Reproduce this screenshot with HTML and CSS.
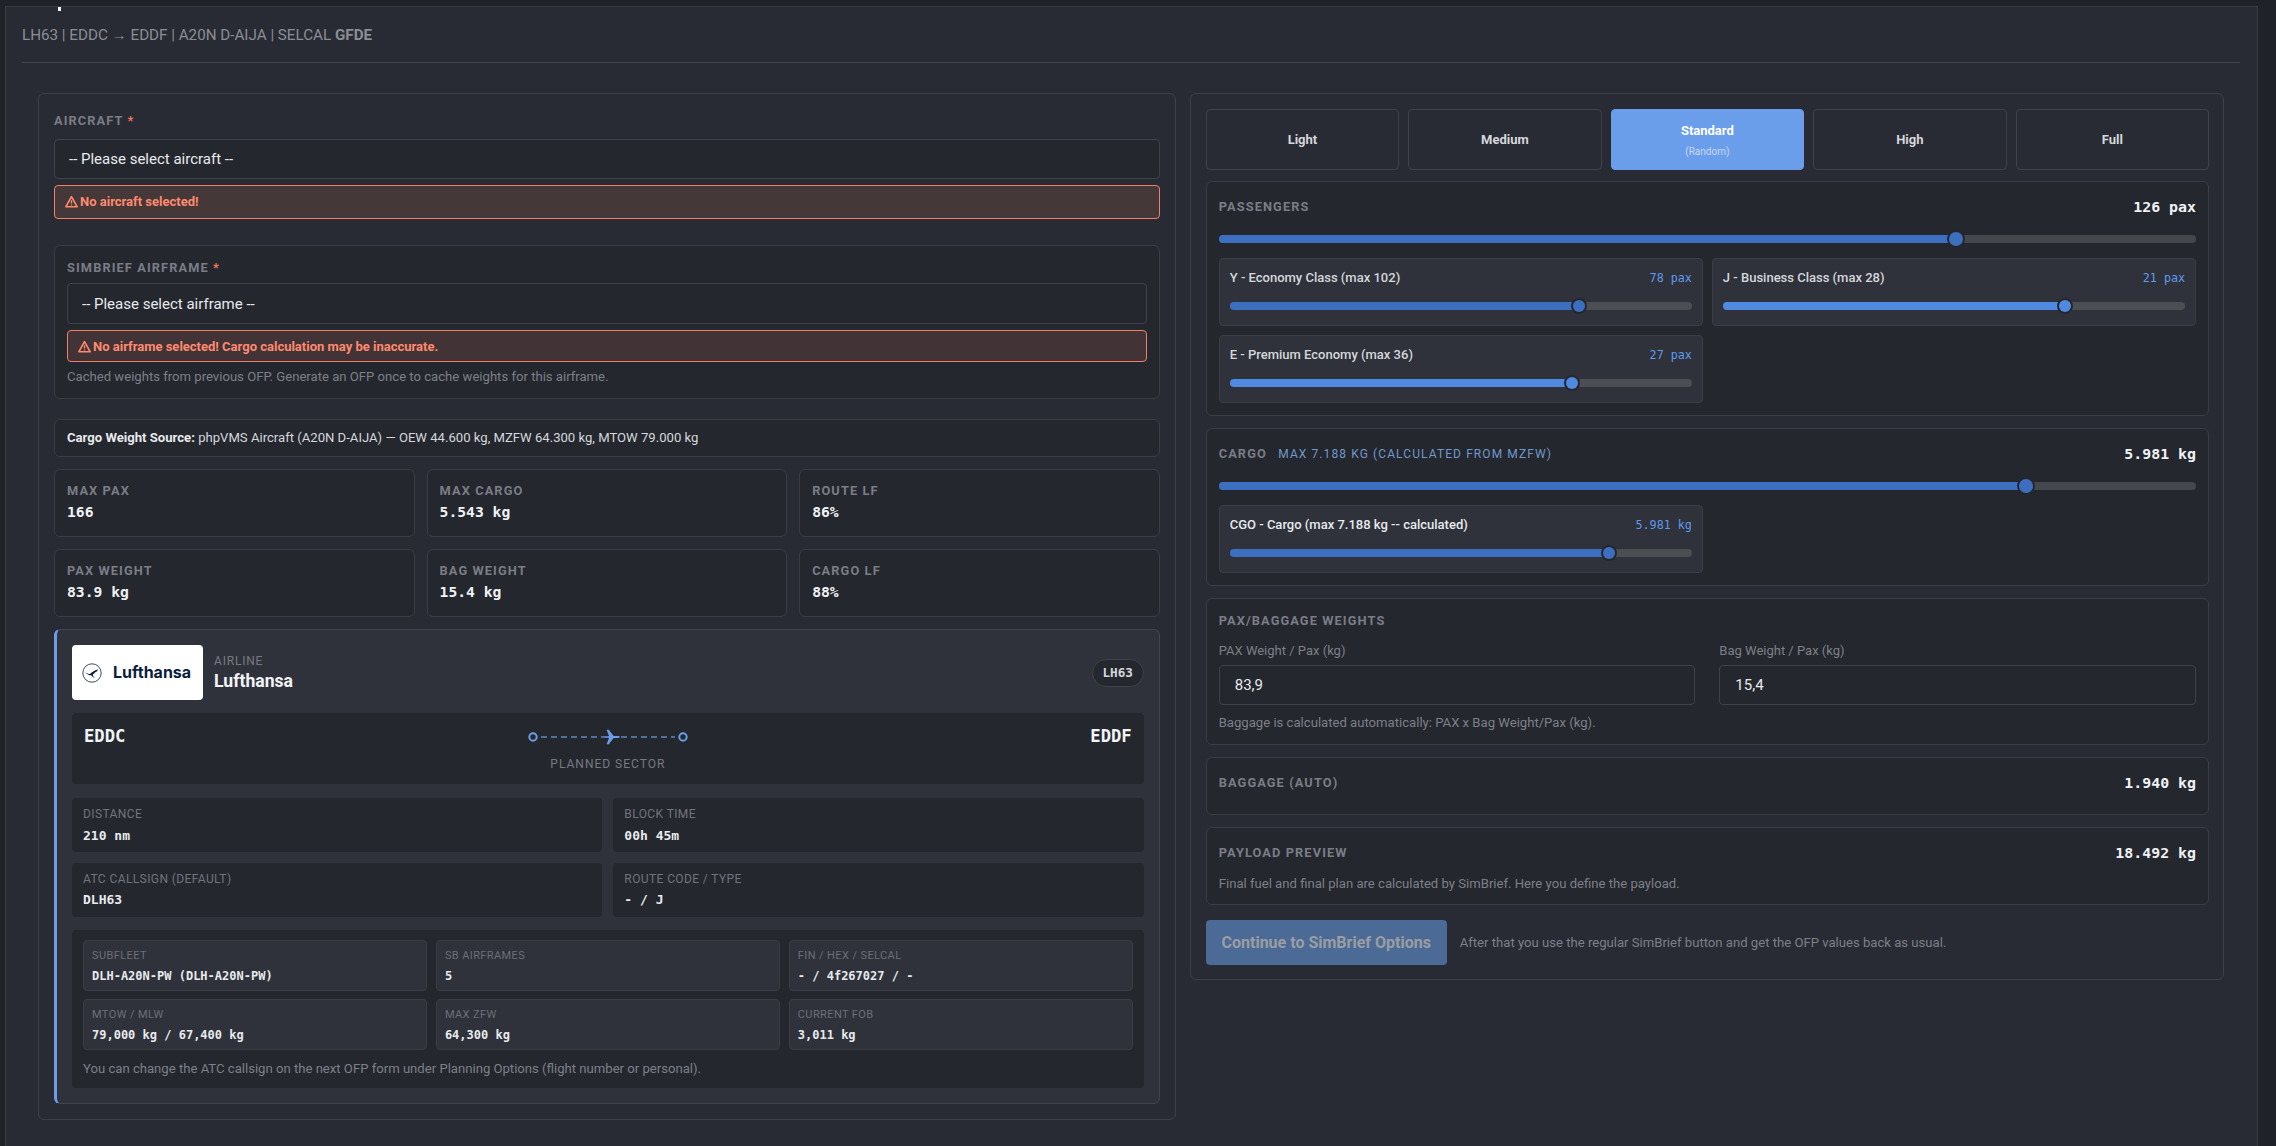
FILE: index.html
```html
<!doctype html>
<html>
<head>
<title>Payload Planning</title>
<link rel="stylesheet" href="styles.css">
</head>
<body>

<div class="page">
	<span class="clipMark"></span>
	<div class="flightLine">LH63 | EDDC → EDDF | A20N D-AIJA | SELCAL <b>GFDE</b></div>
	<hr class="rule">

	<div class="columns">
		<div class="panel leftPanel">
			<div class="field">
				<div class="caption">AIRCRAFT <span class="req">*</span></div>
				<select class="select"><option>-- Please select aircraft --</option></select>
				<div class="alert alertTall">
					<svg class="warnIcon" viewBox="0 0 16 16"><path d="M8 2 L15 14.5 H1 Z" fill="none" stroke="currentColor" stroke-width="2" stroke-linejoin="round"/><path d="M8 6.5 V10.5 M8 11.6 V13" stroke="currentColor" stroke-width="1.7"/></svg>
					No aircraft selected!
				</div>
			</div>

			<div class="card airframe">
				<div class="caption">SIMBRIEF AIRFRAME <span class="req">*</span></div>
				<select class="select selectTall"><option>-- Please select airframe --</option></select>
				<div class="alert">
					<svg class="warnIcon" viewBox="0 0 16 16"><path d="M8 2 L15 14.5 H1 Z" fill="none" stroke="currentColor" stroke-width="2" stroke-linejoin="round"/><path d="M8 6.5 V10.5 M8 11.6 V13" stroke="currentColor" stroke-width="1.7"/></svg>
					No airframe selected! Cargo calculation may be inaccurate.
				</div>
				<div class="hint hintCached">Cached weights from previous OFP. Generate an OFP once to cache weights for this airframe.</div>
			</div>

			<div class="card source"><b>Cargo Weight Source:</b>&nbsp;phpVMS Aircraft (A20N D-AIJA) — OEW 44.600 kg, MZFW 64.300 kg, MTOW 79.000 kg</div>

			<div class="stats">
				<div class="card stat"><div class="caption">MAX PAX</div><div class="statValue">166</div></div>
				<div class="card stat"><div class="caption">MAX CARGO</div><div class="statValue">5.543 kg</div></div>
				<div class="card stat"><div class="caption">ROUTE LF</div><div class="statValue">86%</div></div>
				<div class="card stat"><div class="caption">PAX WEIGHT</div><div class="statValue">83.9 kg</div></div>
				<div class="card stat"><div class="caption">BAG WEIGHT</div><div class="statValue">15.4 kg</div></div>
				<div class="card stat"><div class="caption">CARGO LF</div><div class="statValue">88%</div></div>
			</div>

			<div class="airline">
				<div class="airlineHead">
					<div class="logo">
						<svg class="crane" viewBox="0 0 20 20">
							<circle cx="10" cy="10" r="9.2" fill="none" stroke="#0a1d3d" stroke-width="0.8"/>
							<path d="M3 9.4 C5 10.2 6.6 11 8 11.1 C9.6 9.4 12 7.2 16.5 6.2 C15.6 7.2 15.6 7.6 14.6 8.2 C14.8 8.7 14.2 9 13.2 9.3 C12.2 10.4 11.4 11.1 10.6 11.7 C11 12.8 11.8 14 12.8 15 C11.2 14.4 10 13.4 9 12.3 C7 12.2 5 11 3 9.4 Z" fill="#0a1d3d"/>
						</svg>
						<span class="logoText">Lufthansa</span>
					</div>
					<div class="airlineName">
						<div class="airlineTag">AIRLINE</div>
						<div class="airlineTitle">Lufthansa</div>
					</div>
					<div class="pill">LH63</div>
				</div>

				<div class="route">
					<div class="icao">EDDC</div>
					<div class="routeMid">
						<svg class="routeLine" width="160" height="20" viewBox="0 0 160 20">
							<line x1="13" y1="10" x2="147" y2="10" stroke="#4f7099" stroke-width="2" stroke-dasharray="6 4"/>
							<circle cx="5" cy="10" r="3.7" fill="#24272e" stroke="#6a9eea" stroke-width="2"/>
							<circle cx="155" cy="10" r="3.7" fill="#24272e" stroke="#6a9eea" stroke-width="2"/>
							<path transform="translate(4 0)" d="M72 10 L77 8.9 L74.6 2.8 L76.8 2.8 L81.6 8.9 L87 9 Q88.5 10 87 11 L81.6 11.1 L76.8 17.2 L74.6 17.2 L77 11.1 L72 10 Z" fill="#6a9eea"/>
						</svg>
						<div class="routeLabel">PLANNED SECTOR</div>
					</div>
					<div class="icao icaoEnd">EDDF</div>
				</div>

				<div class="infoGrid">
					<div class="info"><div class="infoLabel">DISTANCE</div><div class="infoValue">210 nm</div></div>
					<div class="info"><div class="infoLabel">BLOCK TIME</div><div class="infoValue">00h 45m</div></div>
					<div class="info"><div class="infoLabel">ATC CALLSIGN (DEFAULT)</div><div class="infoValue infoValueTight">DLH63</div></div>
					<div class="info"><div class="infoLabel">ROUTE CODE / TYPE</div><div class="infoValue infoValueTight">- / J</div></div>
				</div>

				<div class="details">
					<div class="detailGrid">
						<div class="detail"><div class="detailLabel">SUBFLEET</div><div class="detailValue">DLH-A20N-PW (DLH-A20N-PW)</div></div>
						<div class="detail"><div class="detailLabel">SB AIRFRAMES</div><div class="detailValue">5</div></div>
						<div class="detail"><div class="detailLabel">FIN / HEX / SELCAL</div><div class="detailValue">- / 4f267027 / -</div></div>
						<div class="detail"><div class="detailLabel">MTOW / MLW</div><div class="detailValue">79,000 kg / 67,400 kg</div></div>
						<div class="detail"><div class="detailLabel">MAX ZFW</div><div class="detailValue">64,300 kg</div></div>
						<div class="detail"><div class="detailLabel">CURRENT FOB</div><div class="detailValue">3,011 kg</div></div>
					</div>
					<div class="hint detailNote">You can change the ATC callsign on the next OFP form under Planning Options (flight number or personal).</div>
				</div>
			</div>
		</div>

		<div class="panel rightPanel">
			<div class="presets">
				<button class="preset">Light</button>
				<button class="preset">Medium</button>
				<button class="preset presetOn">Standard<small>(Random)</small></button>
				<button class="preset">High</button>
				<button class="preset">Full</button>
			</div>

			<div class="card section">
				<div class="sectionHead"><span class="caption">PASSENGERS</span><span class="total">126 pax</span></div>
				<div class="slider mainSlider"><div class="fill" style="width: 75.4%"></div></div>
				<div class="subGrid">
					<div class="sub">
						<div class="subHead"><span>Y - Economy Class (max 102)</span><span class="subValue">78 pax</span></div>
						<div class="slider"><div class="fill" style="width: 75.5%"></div></div>
					</div>
					<div class="sub">
						<div class="subHead"><span>J - Business Class (max 28)</span><span class="subValue">21 pax</span></div>
						<div class="slider"><div class="fill fillLight" style="width: 74%"></div></div>
					</div>
					<div class="sub">
						<div class="subHead"><span>E - Premium Economy (max 36)</span><span class="subValue">27 pax</span></div>
						<div class="slider"><div class="fill fillLight" style="width: 74%"></div></div>
					</div>
				</div>
			</div>

			<div class="card section">
				<div class="sectionHead"><span class="caption">CARGO <span class="captionNote">MAX 7.188 KG (CALCULATED FROM MZFW)</span></span><span class="total">5.981 kg</span></div>
				<div class="slider mainSlider"><div class="fill" style="width: 82.6%"></div></div>
				<div class="subGrid">
					<div class="sub">
						<div class="subHead"><span class="subStrong">CGO - Cargo (max 7.188 kg -- calculated)</span><span class="subValue">5.981 kg</span></div>
						<div class="slider"><div class="fill" style="width: 82%"></div></div>
					</div>
				</div>
			</div>

			<div class="card section weights">
				<div class="caption">PAX/BAGGAGE WEIGHTS</div>
				<div class="inputs">
					<label class="inputField"><span class="inputLabel">PAX Weight / Pax (kg)</span><input class="input" value="83,9"></label>
					<label class="inputField"><span class="inputLabel">Bag Weight / Pax (kg)</span><input class="input" value="15,4"></label>
				</div>
				<div class="hint weightsNote">Baggage is calculated automatically: PAX x Bag Weight/Pax (kg).</div>
			</div>

			<div class="card section baggage">
				<div class="sectionHead"><span class="caption">BAGGAGE (AUTO)</span><span class="total">1.940 kg</span></div>
			</div>

			<div class="card section payload">
				<div class="sectionHead"><span class="caption">PAYLOAD PREVIEW</span><span class="total">18.492 kg</span></div>
				<div class="hint payloadNote">Final fuel and final plan are calculated by SimBrief. Here you define the payload.</div>
			</div>

			<div class="actions">
				<button class="continue">Continue to SimBrief Options</button>
				<span class="hint">After that you use the regular SimBrief button and get the OFP values back as usual.</span>
			</div>
		</div>
	</div>
</div>

</body>
</html>
```

FILE: styles.css
```css
* {
	box-sizing: border-box;
}
html, body {
	height: 100%;
	overflow: hidden;
}
body {
	margin: 0;
	background-color: #1f2229;
	color: #e8eaed;
	font-family: Roboto, "Liberation Sans", sans-serif;
	font-size: 13px;
}
.page {
	position: relative;
	height: 1140px;
	margin: 6px 18px 0 5px;
	padding: 18px 17px 0 16px;
	background-color: #282b33;
	border: 1px solid #383b43;
	border-bottom: 0;
}
.clipMark {
	position: absolute;
	left: 52px;
	top: 0;
	width: 3px;
	height: 4px;
	background-color: #f4f6fa;
}
.flightLine {
	font-size: 15.2px;
	line-height: 20px;
	color: #8b8e96;
}
.flightLine b {
	color: #8b8e96;
}
.rule {
	margin: 17px 0 30px 0;
	height: 1px;
	border: 0;
	background-color: #41444c;
}
.columns {
	display: grid;
	grid-template-columns: 1.1fr 1fr;
	gap: 14px;
	align-items: start;
	padding: 0 16px;
}
.panel {
	border: 1px solid #3d4048;
	border-radius: 6px;
}
.leftPanel {
	padding: 15px;
}
.rightPanel {
	padding: 15px 14px 14px 15px;
}
.card {
	background-color: #24272e;
	border: 1px solid #3a3d45;
	border-radius: 6px;
}
.caption {
	font-size: 12.8px;
	line-height: 14px;
	font-weight: 700;
	letter-spacing: 1.1px;
	color: #7a7d86;
}
.req {
	color: #f0775c;
}
.field {
	padding-top: 5px;
}
.field > .caption {
	margin-bottom: 11px;
}
.select {
	display: block;
	width: 100%;
	height: 40px;
	padding: 0 15px 0 14px;
	background-color: #24272e;
	border: 1px solid #3f424a;
	border-radius: 4px;
	color: #e8eaed;
	font-family: Roboto, sans-serif;
	font-size: 15px;
	appearance: none;
}
.selectTall {
	height: 41px;
}
.alert {
	display: flex;
	align-items: center;
	gap: 2px;
	height: 32px;
	margin-top: 6px;
	padding: 0 10px;
	background-color: #423436;
	border: 1px solid #f08066;
	border-radius: 4px;
	color: #ff8a70;
	font-size: 13px;
	font-weight: 700;
}
.alertTall {
	height: 34px;
	padding-bottom: 1px;
	background-color: #453839;
}
.warnIcon {
	width: 13px;
	height: 13px;
}
.hint {
	font-size: 13.12px;
	line-height: 16px;
	color: #7d8089;
}
.airframe {
	margin-top: 26px;
	padding: 15px 12px 13px 12px;
}
.airframe > .caption {
	margin-bottom: 8px;
}
.hintCached {
	margin-top: 7px;
}
.source {
	display: flex;
	align-items: center;
	height: 38px;
	margin-top: 20px;
	padding: 0 12px 1px 12px;
	font-size: 13.12px;
	color: #d5d7dc;
}
.source b {
	color: #e8eaed;
}
.stats {
	display: grid;
	grid-template-columns: repeat(3, 1fr);
	gap: 12px;
	margin-top: 12px;
}
.stat {
	padding: 14px 12px 15px 12px;
}
.statValue {
	margin-top: 5px;
	font-family: "DejaVu Sans Mono", monospace;
	font-size: 14.7px;
	line-height: 18px;
	font-weight: 700;
	color: #f0f2f5;
}
.airline {
	margin-top: 12px;
	padding: 15px 15px 15px 15px;
	background-color: #2f323a;
	border: 1px solid #41444c;
	border-left: 3px solid #6a9eea;
	border-radius: 6px;
}
.airlineHead {
	display: flex;
	align-items: center;
	gap: 11px;
}
.logo {
	display: flex;
	align-items: center;
	gap: 11px;
	width: 131px;
	height: 55px;
	padding-left: 10px;
	background-color: #fff;
	border-radius: 4px;
}
.crane {
	width: 20px;
	height: 20px;
}
.logoText {
	padding-bottom: 2px;
	font-family: Inter, Roboto, sans-serif;
	font-size: 16px;
	font-weight: 700;
	color: #0a1d3d;
}
.airlineName {
	flex-grow: 1;
}
.airlineTag {
	font-size: 12px;
	line-height: 14px;
	letter-spacing: 0.8px;
	color: #777a83;
}
.airlineTitle {
	margin-top: 3px;
	font-size: 17.6px;
	line-height: 20px;
	font-weight: 700;
	color: #f2f4f7;
}
.pill {
	display: flex;
	align-items: center;
	justify-content: center;
	width: 52px;
	height: 28px;
	background-color: #24272e;
	border: 1px solid #3f424a;
	border-radius: 14px;
	font-family: "DejaVu Sans Mono", monospace;
	font-size: 12.7px;
	font-weight: 700;
	color: #d5d7dc;
}
.route {
	display: grid;
	grid-template-columns: 1fr auto 1fr;
	height: 71px;
	margin-top: 13px;
	padding: 12px 12px 0 12px;
	background-color: #24272e;
	border-radius: 4px;
}
.icao {
	font-family: "DejaVu Sans Mono", monospace;
	font-size: 17.2px;
	line-height: 22px;
	font-weight: 700;
	color: #f2f4f7;
}
.icaoEnd {
	text-align: right;
}
.routeMid {
	padding-top: 2px;
	text-align: center;
}
.routeLine {
	display: block;
}
.routeLabel {
	margin-top: 10px;
	font-size: 12px;
	line-height: 14px;
	letter-spacing: 1px;
	color: #777a83;
}
.infoGrid {
	display: grid;
	grid-template-columns: 1fr 1fr;
	gap: 11px;
	margin-top: 14px;
}
.info {
	height: 54px;
	padding: 9px 11px 0 11px;
	background-color: #24272e;
	border-radius: 4px;
}
.infoLabel {
	font-size: 12px;
	line-height: 14px;
	letter-spacing: 0.4px;
	color: #71747d;
}
.infoValue {
	margin-top: 7px;
	font-family: "DejaVu Sans Mono", monospace;
	font-size: 13px;
	line-height: 16px;
	font-weight: 700;
	color: #e8eaed;
}
.infoValueTight {
	margin-top: 6px;
}
.details {
	margin-top: 13px;
	padding: 10px 11px 11px 11px;
	background-color: #24272e;
	border-radius: 4px;
}
.detailGrid {
	display: grid;
	grid-template-columns: repeat(3, 1fr);
	gap: 8px 9px;
}
.detail {
	padding: 8px 8px 6px 8px;
	background-color: #2f323a;
	border: 1px solid #3a3d45;
	border-radius: 4px;
}
.detailLabel {
	font-size: 11px;
	line-height: 13px;
	letter-spacing: 0.4px;
	color: #6c6f78;
}
.detailValue {
	margin-top: 7px;
	font-family: "DejaVu Sans Mono", monospace;
	font-size: 12px;
	line-height: 15px;
	font-weight: 700;
	color: #e8eaed;
}
.detailNote {
	margin-top: 11px;
}
.presets {
	display: grid;
	grid-template-columns: repeat(5, 1fr);
	gap: 9px;
}
.preset {
	height: 61px;
	padding: 0;
	background-color: #282b33;
	border: 1px solid #3f424a;
	border-radius: 4px;
	color: #d5d7dc;
	font-family: Roboto, sans-serif;
	font-size: 13px;
	font-weight: 700;
}
.preset small {
	display: block;
	margin-top: 8px;
	font-size: 10px;
	font-weight: 400;
	color: #c9d9f2;
}
.presetOn {
	background-color: #6a9eea;
	border-color: #6a9eea;
	color: #fff;
}
.section {
	margin-top: 12px;
	padding: 16px 12px 12px 12px;
}
.presets + .section {
	margin-top: 11px;
}
.sectionHead {
	display: flex;
	justify-content: space-between;
	align-items: center;
	height: 18px;
}
.captionNote {
	margin-left: 7px;
	font-size: 12px;
	font-weight: 400;
	color: #7099cb;
}
.total {
	font-family: "DejaVu Sans Mono", monospace;
	font-size: 14.9px;
	font-weight: 700;
	color: #f0f2f5;
}
.slider {
	height: 8px;
	margin-top: 17px;
	background-color: #4b4e53;
	border-radius: 4px;
}
.mainSlider {
	margin-top: 19px;
	background-color: #44474c;
}
.fill {
	position: relative;
	height: 100%;
	background-color: #3d6fc0;
	border-radius: 4px;
}
.fill::after {
	content: "";
	position: absolute;
	right: -6px;
	top: -2px;
	width: 12px;
	height: 12px;
	background-color: inherit;
	border-radius: 50%;
	box-shadow: 0 0 0 2px #24272e;
}
.mainSlider .fill::after {
	right: -7px;
	top: -3px;
	width: 14px;
	height: 14px;
}
.fillLight {
	background-color: #4f8ae0;
}
.subGrid {
	display: grid;
	grid-template-columns: 1fr 1fr;
	gap: 9px;
	margin-top: 15px;
}
.sub {
	height: 68px;
	padding: 10px 10px 0 10px;
	background-color: #2f323a;
	border: 1px solid #3a3d45;
	border-radius: 4px;
}
.subHead {
	display: flex;
	justify-content: space-between;
	align-items: center;
	height: 16px;
	font-size: 13px;
	font-weight: 500;
	color: #d5d7dc;
}
.subStrong {
	color: #e8eaed;
}
.subValue {
	position: relative;
	top: 1px;
	font-family: "DejaVu Sans Mono", monospace;
	font-size: 11.7px;
	font-weight: 400;
	color: #5f9aee;
}
.weights {
	padding: 13px 12px 13px 12px;
}
.weights > .caption {
	padding: 2px 0;
	line-height: 14px;
}
.inputs {
	display: grid;
	grid-template-columns: 1fr 1fr;
	gap: 24px;
	margin-top: 13px;
}
.inputLabel {
	display: block;
	font-size: 13px;
	line-height: 16px;
	color: #7d8089;
}
.input {
	display: block;
	width: 100%;
	height: 40px;
	margin-top: 6px;
	padding: 0 15px;
	background-color: #24272e;
	border: 1px solid #3f424a;
	border-radius: 4px;
	color: #e8eaed;
	font-family: Roboto, sans-serif;
	font-size: 15px;
}
.weightsNote {
	margin-top: 10px;
}
.baggage {
	height: 58px;
}
.payloadNote {
	margin-top: 14px;
}
.actions {
	display: flex;
	align-items: center;
	gap: 13px;
	margin-top: 15px;
}
.continue {
	width: 241px;
	height: 45px;
	padding: 0;
	background-color: #4c6a96;
	border: 0;
	border-radius: 4px;
	color: #9a9da2;
	font-family: Roboto, sans-serif;
	font-size: 16px;
	font-weight: 700;
}
```
